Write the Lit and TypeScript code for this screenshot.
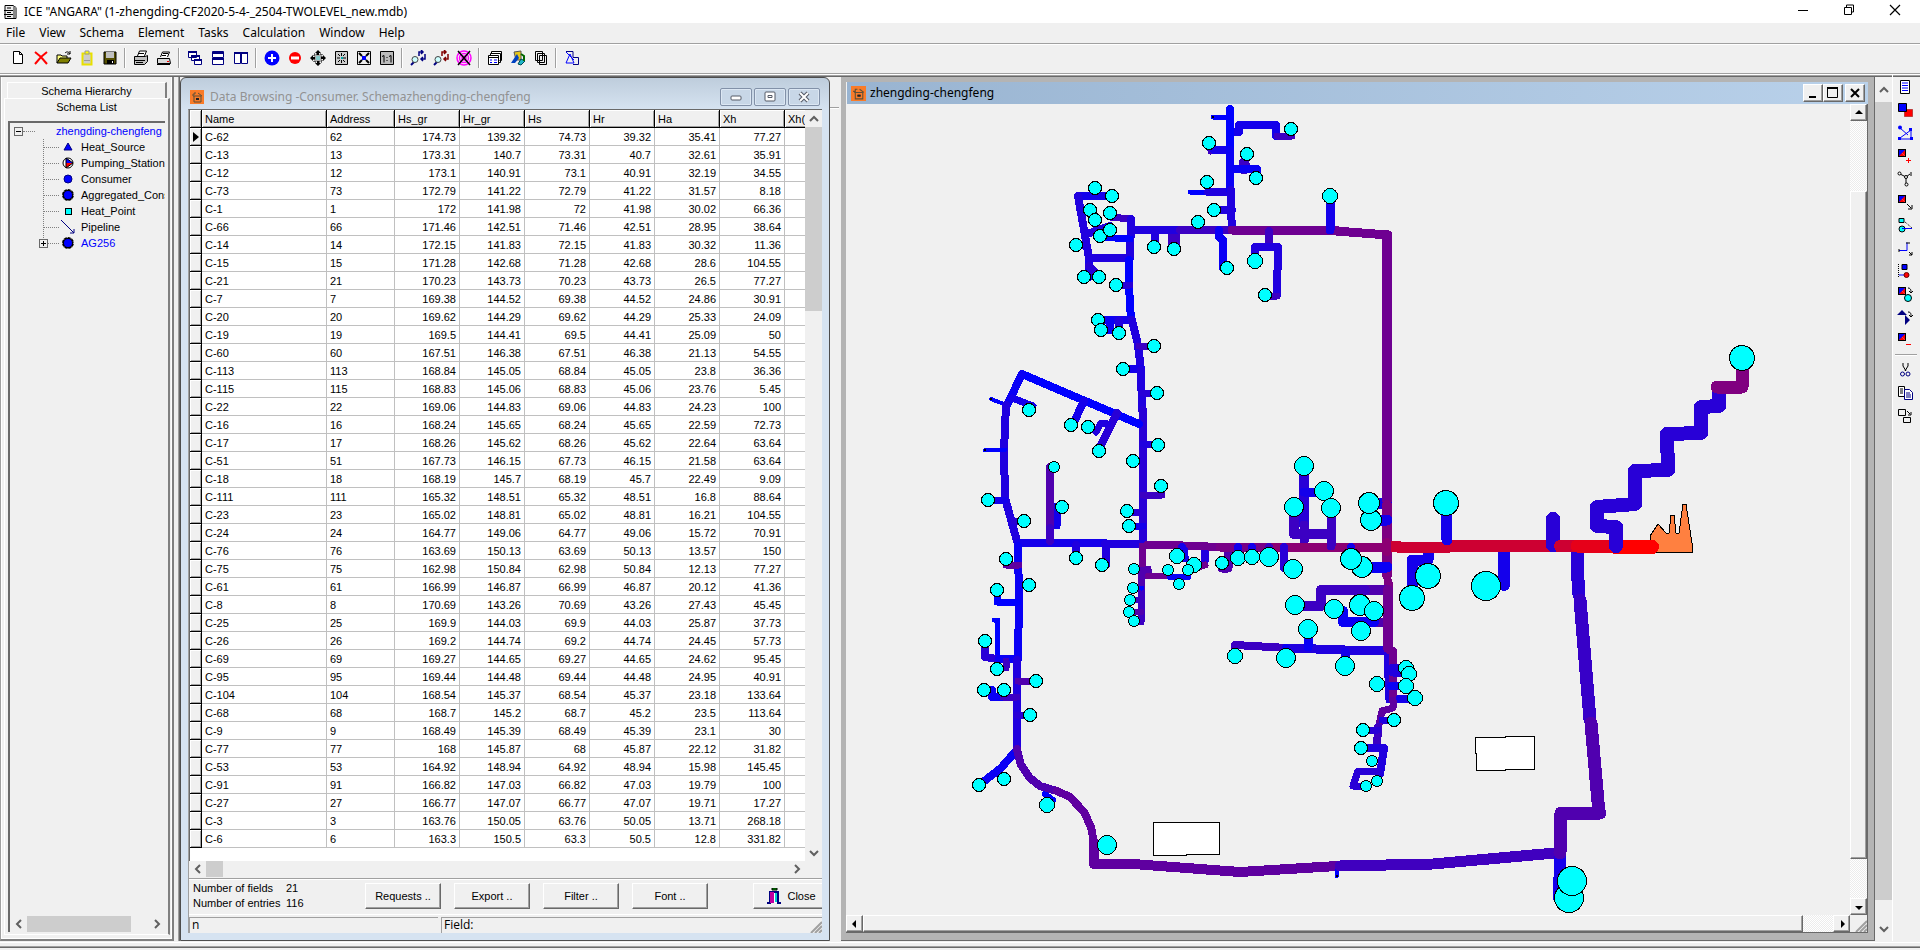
import { LitElement, html, svg, css } from "lit";
import { customElement } from "lit/decorators.js";
import { styleMap } from "lit/directives/style-map.js";

const FIELDS = ["Name", "Address", "Hs_gr", "Hr_gr", "Hs", "Hr", "Ha", "Xh", "Xh(p)"];

const ROWS = `62 174.73 139.32 74.73 39.32 35.41 77.27
13 173.31 140.7 73.31 40.7 32.61 35.91
12 173.1 140.91 73.1 40.91 32.19 34.55
73 172.79 141.22 72.79 41.22 31.57 8.18
1 172 141.98 72 41.98 30.02 66.36
66 171.46 142.51 71.46 42.51 28.95 38.64
14 172.15 141.83 72.15 41.83 30.32 11.36
15 171.28 142.68 71.28 42.68 28.6 104.55
21 170.23 143.73 70.23 43.73 26.5 77.27
7 169.38 144.52 69.38 44.52 24.86 30.91
20 169.62 144.29 69.62 44.29 25.33 24.09
19 169.5 144.41 69.5 44.41 25.09 50
60 167.51 146.38 67.51 46.38 21.13 54.55
113 168.84 145.05 68.84 45.05 23.8 36.36
115 168.83 145.06 68.83 45.06 23.76 5.45
22 169.06 144.83 69.06 44.83 24.23 100
16 168.24 145.65 68.24 45.65 22.59 72.73
17 168.26 145.62 68.26 45.62 22.64 63.64
51 167.73 146.15 67.73 46.15 21.58 63.64
18 168.19 145.7 68.19 45.7 22.49 9.09
111 165.32 148.51 65.32 48.51 16.8 88.64
23 165.02 148.81 65.02 48.81 16.21 104.55
24 164.77 149.06 64.77 49.06 15.72 70.91
76 163.69 150.13 63.69 50.13 13.57 150
75 162.98 150.84 62.98 50.84 12.13 77.27
61 166.99 146.87 66.99 46.87 20.12 41.36
8 170.69 143.26 70.69 43.26 27.43 45.45
25 169.9 144.03 69.9 44.03 25.87 37.73
26 169.2 144.74 69.2 44.74 24.45 57.73
69 169.27 144.65 69.27 44.65 24.62 95.45
95 169.44 144.48 69.44 44.48 24.95 40.91
104 168.54 145.37 68.54 45.37 23.18 133.64
68 168.7 145.2 68.7 45.2 23.5 113.64
9 168.49 145.39 68.49 45.39 23.1 30
77 168 145.87 68 45.87 22.12 31.82
53 164.92 148.94 64.92 48.94 15.98 145.45
91 166.82 147.03 66.82 47.03 19.79 100
27 166.77 147.07 66.77 47.07 19.71 17.27
3 163.76 150.05 63.76 50.05 13.71 268.18
6 163.3 150.5 63.3 50.5 12.8 331.82`.split("\n").map((line) => line.split(" "));

// Pipe segments: colour, stroke width, points in map units.
type Pipe = [string, number, string];
const B = "#0000ff", B1 = "#0a00f5", B2 = "#1400eb", B3 = "#2000df", B4 = "#2800d7", B5 = "#3c00c3", P1 = "#5000af", P2 = "#5f00a0", P3 = "#6e0091", P4 = "#8c0073";
const PIPES: Pipe[] = [
  // north branch
  [B, 5, "1213,117 1230,117"], [B2, 8, "1231,132 1239,132 1239,125 1276,125 1276,136"], [B5, 7, "1277,136 1292,136"],
  [B5, 7, "1211,151 1216,150"], [B2, 8, "1214,150 1230,150"], [B5, 11, "1244,163 1244,169"], [B1, 8, "1231,169 1257,169 1257,172"],
  [B, 5, "1190,192 1206,192"], [B3, 8, "1208,192 1231,192"], [B3, 8, "1214,210 1232,210"],
  [B, 8, "1230,109 1230,150"], [B1, 8, "1230,150 1230,190"], [B3, 8, "1231,190 1231,212 1232,228"],
  [B3, 8, "1155,232 1155,247"], [B5, 12, "1174,234 1174,246"], [B3, 8, "1198,222 1198,230"],
  [B3, 8, "1131,230 1182,230"], [B5, 8, "1180,230 1230,230"],
  [B1, 8, "1219,230 1219,237 1223,240 1223,268"], [P3, 9, "1232,230 1336,230"], [P3, 9, "1336,231 1388,235"],
  [B2, 9, "1330,200 1330,230"], [B5, 8, "1269,231 1269,246"], [B3, 8, "1255,261 1255,247 1278,247 1277,295"], [B5, 7, "1266,296 1277,296"],
  // north-west cluster
  [B2, 8, "1078,196 1110,196"], [B5, 7, "1110,217 1131,219"], [B3, 8, "1131,219 1130,258"], [B3, 8, "1087,234 1110,226"], [B, 7, "1100,237 1130,239"],
  [B1, 8, "1076,245 1086,245"], [B3, 8, "1078,196 1089,258"], [B2, 8, "1089,258 1089,277"], [B4, 8, "1089,266 1099,276"], [B3, 8, "1089,258 1130,258"],
  [B, 8, "1129,260 1129,286 1131,320"], [B4, 7, "1116,285 1130,285"], [B2, 8, "1098,320 1131,320"], [B1, 8, "1110,320 1110,330 1101,330"], [B3, 8, "1119,321 1119,332"],
  [B3, 8, "1132,320 1138,345 1141,370"], [B5, 7, "1139,346 1154,346"], [B2, 8, "1123,369 1141,369"], [B3, 8, "1141,370 1142,410"], [B4, 8, "1143,410 1143,543"],
  [B4, 7, "1143,393 1157,393"], [B3, 7, "1143,444 1158,444"], [B5, 7, "1143,495 1162,495"], [B4, 7, "1127,512 1143,512"], [B2, 7, "1129,526 1143,526"],
  // west loop
  [B, 8, "1022,374 1139,424"], [B1, 8, "1022,374 1008,403"], [B, 4, "991,399 1009,406"], [B2, 7, "1012,398 1033,406"],
  [B3, 8, "1006,405 1004,450 1005,498"], [B, 4, "985,450 1005,450"], [B2, 8, "1084,401 1073,424"], [B4, 8, "1117,413 1101,445"], [B3, 7, "1108,424 1101,423 1096,432"],
  [B3, 8, "1005,498 1017,541"], [B2, 7, "988,500 1005,500"], [B4, 7, "1014,521 1024,521"],
  [B2, 8, "1018,543 1105,543"], [B3, 8, "1105,544 1145,544"], [B2, 7, "1057,506 1057,526"], [P1, 8, "1050,467 1050,526"], [B5, 8, "1050,528 1050,541"],
  [B3, 8, "1076,545 1076,558"], [B3, 8, "1106,545 1106,565"],
  [B1, 8, "1018,546 1019,600 1018,659"], [P2, 7, "1006,565 1019,565"], [B, 7, "997,590 997,602 1018,602"], [B, 5, "994,620 998,620 997,658"],
  [B4, 8, "985,641 985,657 997,659"], [B1, 8, "999,659 1018,659"], [B5, 7, "1006,661 1006,668"], [B3, 8, "1017,660 1017,750"],
  [P1, 7, "1018,681 1036,681"], [B1, 8, "992,690 992,697 1003,697"], [B5, 7, "1003,697 1017,697"], [B4, 7, "1017,715 1030,715"],
  [B1, 8, "1015,752 1001,768 983,782"], [B, 6, "1045,794 1053,800"],
  [P1, 8, "1017,749 1021,765 1030,778 1040,786 1057,791"], [P2, 8, "1057,791 1070,797 1084,812 1091,827 1094,843"], [P2, 10, "1094,843 1094,864 1133,864 1240,872 1337,866"],
  [B, 4, "1337,870 1337,876"], ["#4000bf", 11, "1340,866 1433,864 1555,853"],
  // central stubs
  [B2, 8, "1182,547 1185,558"], [B3, 8, "1205,548 1205,560"], [P3, 7, "1198,567 1205,565"], [P1, 9, "1228,549 1228,568 1222,568"],
  [P3, 7, "1142,546 1142,570"], [P1, 7, "1142,570 1141,590"], [B5, 7, "1141,590 1141,622"], [P1, 7, "1148,569 1148,576"], [P3, 6, "1148,576 1170,576"], [B1, 6, "1170,577 1188,577"],
  [B, 5, "1141,588 1142,588"], [B5, 6, "1130,600 1141,600"], [P1, 6, "1130,612 1141,612"],
  [P3, 8, "1147,545 1170,545 1220,547"], ["#780087", 9, "1220,547 1270,547"],
  [B5, 10, "1294,507 1294,534 1331,534"], [B4, 10, "1304,466 1304,525"], [B5, 9, "1304,525 1304,542"], [B2, 9, "1304,492 1324,492"],
  [P4, 9, "1270,547 1387,547"], [B5, 9, "1331,512 1331,546"], [B2, 8, "1182,547 1184,550"], [B2, 8, "1238,547 1238,558"], [B2, 8, "1252,547 1252,557"], [B5, 8, "1269,547 1269,557"], [B4, 8, "1284,547 1284,568"], [B2, 8, "1351,547 1351,559"],
  [B2, 11, "1371,503 1387,503"], [B2, 11, "1371,520 1387,520"],
  [P3, 10, "1387,235 1387,500"], ["#7d0082", 10, "1387,505 1387,575"], [B2, 11, "1371,520 1387,520"], [B1, 11, "1362,567 1387,567"], ["#7d0082", 9, "1388,582 1388,588"],
  [P1, 10, "1360,590 1388,590"], [B5, 10, "1365,590 1321,590 1321,606 1295,606"], [P1, 9, "1374,622 1388,622"], [B1, 10, "1343,611 1343,622 1374,622"],
  [B5, 8, "1235,654 1235,645 1288,648"], [B3, 9, "1286,648 1345,650 1388,650"], [B1, 9, "1308,629 1308,647"], [B2, 9, "1345,652 1345,660"], [B1, 8, "1286,648 1286,652"],
  [B3, 7, "1387,655 1389,700"], [P3, 10, "1388,590 1388,648"], [P3, 8, "1389,650 1393,651 1393,700"],
  [B3, 13, "1393,670 1404,670"], [B1, 8, "1391,686 1406,686"], [B2, 8, "1399,699 1415,699"], [P2, 7, "1393,700 1393,708 1382,711 1379,725"], [B3, 7, "1382,720 1394,720"],
  [B5, 8, "1378,727 1377,748"], [B4, 7, "1363,730 1378,730"], [B3, 8, "1361,748 1384,748 1380,774"], [B4, 7, "1378,771 1358,771 1353,786 1364,786"],
  // trunk from the plant
  [B2, 11, "1428,553 1428,560 1412,560 1412,590"], [B2, 12, "1504,550 1504,585"], ["#cd0032", 11, "1397,547 1450,547"], ["#cd0032", 12, "1446,546 1572,546"],
  [P4, 10, "1387,543 1387,551"],
  [B2, 11, "1446,505 1447,540"], [B4, 13, "1577,550 1577,565 1579,595"], ["#3700c8", 13, "1580,600 1590,720"], [P1, 13, "1591,723 1599,813"],
  [B2, 12, "1560,858 1559,898"], [P1, 13, "1600,813 1561,813 1560,853"], [B4, 14, "1553,519 1553,545"],
  ["#cd0032", 12, "1560,546 1575,546"], ["#e60019", 13, "1577,546 1620,546"]
];
const SUPPLY: Pipe[] = [
  ["#ff0000", 14, "1616,547 1652,547"],
  [B4, 14, "1719,388 1719,406 1701,407 1701,433 1667,434 1668,470 1635,471 1635,504 1597,507 1597,526 1616,527 1616,546"],
  ["#800080", 13, "1742,360 1742,387 1717,387"]
];
const TRUNK_JOIN = "M1391 541h10v11h-10z";

// Consumers: centre x, centre y, radius.
const NODES: number[][] = [
  ...[[1291, 129], [1209, 143], [1247, 154], [1256, 178], [1207, 182], [1214, 210], [1198, 222], [1154, 247], [1174, 249], [1227, 268], [1265, 295],
    [1095, 188], [1112, 196], [1090, 210], [1095, 220], [1110, 213], [1100, 236], [1110, 230], [1076, 245], [1084, 277], [1099, 277], [1116, 285], [1098, 320], [1101, 330], [1119, 333],
    [1154, 346], [1123, 369], [1157, 393], [1158, 445], [1133, 461], [1161, 486], [1127, 511], [1129, 526], [1029, 410], [1071, 425], [1088, 427], [1099, 451],
    [988, 500], [1024, 521], [1062, 507], [1076, 558], [1102, 565], [1006, 559], [1029, 585], [997, 590], [985, 641], [997, 669], [1036, 681], [984, 690], [1004, 690],
    [1030, 715], [979, 785], [1004, 779], [1222, 563], [1394, 720], [1363, 730], [1361, 748]].map(([x, y]) => [x, y, 6.5]),
  ...[[1330, 196], [1255, 261], [1047, 805], [1177, 556], [1194, 565], [1238, 558], [1252, 557], [1235, 656], [1406, 668], [1409, 674], [1377, 684], [1406, 686], [1415, 698]].map(([x, y]) => [x, y, 7.5]),
  ...[[1054, 467], [1134, 569], [1188, 570], [1168, 570], [1179, 584], [1133, 588], [1130, 600], [1129, 612], [1134, 621], [1372, 761], [1377, 781], [1366, 786]].map(([x, y]) => [x, y, 5.5]),
  ...[[1107, 845], [1269, 557], [1293, 569], [1304, 466], [1324, 491], [1294, 507], [1331, 508], [1295, 605], [1334, 609], [1308, 629], [1361, 631], [1286, 658], [1345, 666]].map(([x, y]) => [x, y, 9.5]),
  [1371, 520, 10.5], [1369, 503, 10.5], [1362, 567, 10.5], [1351, 559, 10.5], [1360, 605, 10.5], [1374, 611, 9.5],
  [1446, 503, 12.5], [1428, 576, 12.5], [1412, 598, 12.5], [1742, 358, 12.5], [1486, 586, 14.5], [1569, 898, 14.5], [1572, 881, 14.5]
];
const STUB_ENDS = [[1213, 117], [991, 399], [985, 450], [1337, 876]];

const n = "#000080";
const house = svg`<rect width="14" height="14" fill="#f97b28"/><path d="M2 5h2V3h2M8 3l4 3M3 6h8M4 6v6h7V6M6 9h3" fill="none" stroke="#5d5038"/><path d="M6 8h3v2H6z" fill="#222"/>`;
const splitSquare = svg`<path d="M1 1h8v8z" fill="#f00"/><path d="M1 1v8h8z" fill="#f00"/><path d="M1 1h8l-8 8z" fill="#00f"/><rect x="1.5" y="1.5" width="7" height="7" fill="none" stroke="#000"/>`;
const magnifier = svg`<path d="M1 15l4-4" stroke="${n}" stroke-width="2"/><circle cx="5" cy="9.5" r="3" fill="#cff" stroke="#444"/>`;

const ICONS: Record<string, unknown> = {
  app: svg`<path d="M3 1.500h8l3 2v11H3z" fill="#eee" stroke="#000"/><path d="M11 2v12h3V3z" fill="#888"/><path d="M2 6.500h9M2 10.500h9M5 4h4M5 8.500h4M5 12.500h4" stroke="#000"/>`,
  house,
  new: svg`<path d="M3.500 1.500h6l3 3v9h-9zM9.500 1.500v3h3" fill="#fff" stroke="#000"/>`,
  del: svg`<path d="M2 2l6 5 6-5M2 14l6-7 6 7" fill="none" stroke="#f00" stroke-width="2"/>`,
  open: svg`<path d="M1 13V5h4l1 1h5v2" fill="#ffff80" stroke="#000"/><path d="M1 13l3-5h11l-3 5z" fill="#808000" stroke="#000"/><path d="M9 3c2-2 4-1 5 1M14 1v3h-3" fill="none" stroke="#000"/>`,
  paste: svg`<path d="M3.500 3.500h9v11h-9z" fill="#ccc" stroke="#e8e000" stroke-width="2"/><path d="M6 1h4v3H6z" fill="#ff0" stroke="#999"/><path d="M5 10.500h6" stroke="#999"/>`,
  save: svg`<path d="M2 2h12v12H2z" fill="#554f00" stroke="#000"/><path d="M4 2h8v6H4z" fill="#c0c0c0"/><path d="M5 10h7v4H5z" fill="#000"/><path d="M10 11h1v2h-1z" fill="#fff"/>`,
  print: svg`<path d="M4.500 6l2-5h7l-2 5" fill="#fff" stroke="#000"/><path d="M1.500 6.500h11l2-1v6l-3 3h-10z" fill="#c0c0c0" stroke="#000"/><path d="M1 10.500h11M6 3.500h5M3 12.500h7" stroke="#000"/>`,
  print2: svg`<path d="M4.500 7l2-5h7l-2 5" fill="#fff" stroke="#000"/><path d="M1.500 8.500h12l1 5h-13z" fill="#d8d8d8" stroke="#000"/><path d="M7 3.500h5M6 5.500h4M1 14.500h13" stroke="#000"/><path d="M11 11h2v1h-2z" fill="red"/>`,
  cascade: svg`<g fill="#fff" stroke="${n}"><path d="M1.500 1.500h8v6h-8zM4.500 5.500h8v5h-8zM7.500 9.500h7v5h-7z"/><path stroke-width="2" d="M1 2h9M4 6h9M7 10h8"/></g>`,
  tileh: svg`<g fill="#fff" stroke="${n}"><path d="M2.500 1.500h11v6h-11zM2.500 8.500h11v6h-11z"/><path stroke-width="2" d="M2 3h12M2 9h12"/></g>`,
  tilev: svg`<g fill="#fff" stroke="${n}"><path d="M1.500 2.500h6v11h-6zM8.500 2.500h6v11h-6z"/><path stroke-width="2" d="M1 3h14"/></g>`,
  plus: svg`<circle cx="8" cy="8" r="7.500" fill="#00f"/><path d="M8 4v8M4 8h8" stroke="#fff" stroke-width="2"/>`,
  minus: svg`<circle cx="8" cy="8" r="6" fill="#f00"/><path d="M4 8h8" stroke="#fff" stroke-width="3"/>`,
  expand: svg`<path d="M4 4h8v8H4z" fill="#aaa" stroke="#000" stroke-dasharray="1 1"/><path d="M8 0l3 3H5zM8 16l3-3H5zM0 8l3-3v6zM16 8l-3-3v6z" fill="#000"/><path d="M8 2v3M8 11v3M2 8h3M11 8h3" stroke="#000" stroke-width="2"/><path d="M6 6h4v4H6z" fill="#8cc"/>`,
  center: svg`<path d="M2.500 1.500h12v13h-12z" fill="#ccc" stroke="#000"/><path d="M8.500 3v3M8.500 10v3M4 8h3M10 8h3M5 4l2 2M12 4l-2 2M5 12l2-2M12 12l-2-2" stroke="#000"/><path d="M8 7h2v2H8z" fill="#0aa"/>`,
  fit: svg`<path d="M1.500 1.500h13v13h-13z" fill="#eee" stroke="#000"/><path d="M3 3l3 3M13 3l-3 3M3 13l3-3M13 13l-3-3" stroke="#000" stroke-width="2"/><path d="M6 6h4v4H6z" fill="#00f"/>`,
  oneone: svg`<path d="M1.500 1.500h13v13h-13z" fill="#bbb" stroke="#000"/><path d="M3 6.500l2-1v7M10 6.500l2-1v7M8 7v1M8 10v1" fill="none" stroke="#000"/>`,
  find: svg`${magnifier}<path d="M9 6V2h3M15 4v5h-3M11 0l2 2-2 2M13 7l-2 2 2 2" fill="none" stroke="${n}" stroke-width="1.500"/>`,
  find2: svg`${magnifier}<path d="M9 6V2h3M15 4v5h-3M11 0l2 2-2 2M13 7l-2 2 2 2" fill="none" stroke="#800000" stroke-width="1.500"/>`,
  target: svg`<g fill="none" stroke="#f0f" stroke-width="1.500"><circle cx="8" cy="8" r="2"/><circle cx="8" cy="8" r="4.500"/><circle cx="8" cy="8" r="7"/></g><path d="M2 1l12 14M14 1L2 15" stroke="#000" stroke-width="1.500"/>`,
  report: svg`<path d="M4.500 3.500v-2h10v9h-2M3.500 5.500v-2h10v9h-2" fill="#fff" stroke="#000"/><path d="M1.500 5.500h10v9h-10z" fill="#fff" stroke="#000"/><path d="M2 7.500h9" stroke="#000"/><path d="M3 10h2M7 10h3M3 12.500h2M7 12.500h3" stroke="#00f"/>`,
  palette: svg`<path d="M4 2l7-1v9H6z" fill="#e6c619" stroke="#555"/><path d="M1 13L7 4l2 4-4 5z" fill="#0040c0"/><path d="M8 14l3-5 4 2-4 4z" fill="#20b8c8" stroke="#045"/><path d="M11 4l3 2v5" fill="none" stroke="#060" stroke-width="2"/>`,
  copies: svg`<g fill="#f0f0f0" stroke="#000"><path d="M2.500 1.500h7v9h-7zM4.500 3.500h7v9h-7zM6.500 5.500h7v9h-7z"/></g>`,
  calc: svg`<path d="M2 1.500h7v6h5.500v7H9" fill="none" stroke="${n}"/><path d="M2 13l4-9 4 9zM2 2l8 8" fill="none" stroke="#00f"/>`,
  list: svg`<path d="M3.500 1.500h9v13h-9z" fill="#fff" stroke="#000"/><path d="M5 4h6M5 6.500h6M5 9h6M5 11.500h6" stroke="#00f"/>`,
  group: svg`<path d="M7.500 7.500h8v7h-8z" fill="#f00" stroke="#800" stroke-dasharray="1 1"/><path d="M1.500 1.500h8v8h-8z" fill="#00f" stroke="#000"/>`,
  netsel: svg`<path d="M3 13l11-8v9H3zM3 3l8 7" fill="none" stroke="#00f"/><g fill="#00f"><circle cx="3" cy="2.500" r="2"/><path d="M12 3h3v3h-3zM1 12h3v3H1zM13 12h3v3h-3z"/></g>`,
  addsq: svg`${splitSquare}<path d="M11.500 10v5M9 12.500h5" stroke="#f00"/>`,
  branch: svg`<path d="M3 3l6 3 4-3M9 6v7" fill="none" stroke="#000"/><g fill="#fff" stroke="#000"><circle cx="2.500" cy="2.500" r="1.500"/><circle cx="9" cy="6" r="1.500"/><circle cx="9.500" cy="13.500" r="1.500"/></g><path d="M14 1v4" stroke="#000"/>`,
  movesq: svg`${splitSquare}<path d="M10 10l4 4M15 11v4h-4" fill="none" stroke="#000"/>`,
  shape: svg`<path d="M2 1.500h5v4H2z" fill="#0ff" stroke="#000"/><circle cx="5" cy="12" r="3" fill="#0ff" stroke="#000"/><path d="M5 11.500h10" stroke="#00f"/><path d="M8 5l7 6" stroke="#000" stroke-dasharray="1 1"/>`,
  corner: svg`<path d="M2 10.500h8v-8" fill="none" stroke="#00f"/><path d="M9 3h4M2 9v3M12 12l3 3M15 12v3h-3" fill="none" stroke="#000"/>`,
  pump: svg`<path d="M5 1.500h5v5H5z" fill="#00f" stroke="#000"/><path d="M1.500 1v13" stroke="#000" stroke-dasharray="1 1"/><path d="M2 12h6" stroke="#00f"/><circle cx="9.500" cy="12" r="2.500" fill="#f00" stroke="#600"/>`,
  swap: svg`${splitSquare}<circle cx="11" cy="12" r="3.500" fill="#0ff" stroke="#000"/><path d="M11 2c3 0 3 3 3 4M12 5l2 2 2-2" fill="none" stroke="#000"/>`,
  flip: svg`<path d="M0 6l5-5 5 5zM8 6v10l5-5z" fill="${n}"/><path d="M11 3c3 0 3 2 3 4M12 6l2 2 2-2" fill="none" stroke="#000"/>`,
  remsq: svg`${splitSquare}<path d="M9 12.500h5" stroke="#f00"/>`,
  cut: svg`<path d="M6 1v3l3 5M11 1v3L8 9" fill="none" stroke="#000"/><circle cx="5.500" cy="12" r="2" fill="none" stroke="${n}"/><circle cx="11" cy="12" r="2" fill="none" stroke="${n}"/>`,
  copy: svg`<path d="M1.500 1.500h6v10h-6z" fill="#fff" stroke="#000"/><path d="M3 4h3M3 6h3M3 8h3" stroke="#000"/><path d="M7.500 4.500h5l3 3v7h-8z" fill="#fff" stroke="${n}"/><path d="M9 8h4M9 10h5M9 12h5" stroke="${n}"/>`,
  dup: svg`<g fill="none" stroke="#000"><path d="M1.500 1.500h7v6h-7zM6.500 9.500h7v5h-7zM10 3l3 3M14 4v3h-3"/></g>`,
  min: svg`<path d="M3 8.500h10" stroke="#000"/>`,
  restore: svg`<path d="M3.500 5.500h7v7h-7zM5.500 5v-2h7v7h-2" fill="none" stroke="#000"/>`,
  close: svg`<path d="M3 3l10 10M13 3L3 13" stroke="#000" stroke-width="1.200"/>`,
  softmin: svg`<rect x="3" y="7" width="10" height="4" rx="1" fill="#fff" stroke="#555a66"/>`,
  softmax: svg`<rect x="3" y="3" width="10" height="9" rx="1" fill="#fff" stroke="#555a66"/><path d="M6 6.500h4v2H6z" fill="none" stroke="#555a66"/>`,
  softclose: svg`<path d="M4 4l8 8M12 4l-8 8" stroke="#555a66" stroke-width="4"/><path d="M4 4l8 8M12 4l-8 8" stroke="#fff" stroke-width="2"/>`,
  hardmin: svg`<path d="M4 12h7" stroke="#000" stroke-width="2"/>`,
  hardmax: svg`<path d="M2.500 2.500h10v10h-10z" fill="none" stroke="#000"/><path d="M2 3h11" stroke="#000" stroke-width="2"/>`,
  hardclose: svg`<path d="M4 4l8 8M12 4l-8 8" stroke="#000" stroke-width="2"/>`,
  source: svg`<path d="M4 11l4-7 4 7z" fill="#00f" stroke="${n}"/>`,
  station: svg`<circle cx="8" cy="8" r="5" fill="#fff" stroke="#000"/><path d="M6 3l7 5H6z" fill="#00f"/><path d="M6 8h7l-7 5z" fill="#f00"/><path d="M6 3v10l7-5z" fill="none" stroke="#000"/>`,
  consumer: svg`<circle cx="8" cy="8" r="4" fill="#00f" stroke="${n}"/>`,
  aggregated: svg`<circle cx="8" cy="8" r="5" fill="#00f" stroke="#000" stroke-width="2"/><circle cx="8" cy="8" r="5.500" fill="none" stroke="#fff" stroke-dasharray="1 3"/>`,
  point: svg`<rect x="5.500" y="5.500" width="6" height="6" fill="#0ff" stroke="#000"/>`,
  pipeline: svg`<path d="M1 1l13 13M14 10v4h-4" fill="none" stroke="${n}"/>`,
  door: svg`<path d="M1 15h3V4h8v11h3" fill="#fff" stroke="${n}" stroke-width="2"/><path d="M4 4h4v11H4z" fill="#c000a0"/><path d="M9 5h2v9H9z" fill="#0cc"/><path d="M6 0h5v2H6z" fill="#0a0" stroke="#000"/>`
};
const icon = (name: string, size = 16) =>
  html`<svg class="icon" width=${size} height=${size} viewBox=${name === "house" ? "0 0 14 14" : "0 0 16 16"} aria-hidden="true">${ICONS[name]}</svg>`;

const chevron = (turn: string) => {
  const d: Record<string, string> = { up: "M4 10l4-4 4 4", down: "M4 6l4 4 4-4", left: "M10 4L6 8l4 4", right: "M6 4l4 4-4 4" };
  return html`<svg class="icon" width="16" height="16" viewBox="0 0 16 16" aria-hidden="true"><path d=${d[turn]} fill="none" stroke="#606060" stroke-width="2" /></svg>`;
};
const arrow = (turn: string) => {
  const d: Record<string, string> = { up: "M1 6l4-4 4 4z", down: "M1 4l4 4 4-4z", left: "M6 1L2 5l4 4z", right: "M4 1l4 4-4 4z" };
  return html`<svg class="icon" width="10" height="10" viewBox="0 0 10 10" aria-hidden="true"><path d=${d[turn]} /></svg>`;
};

@customElement("app-root")
export class AppRoot extends LitElement {
  static styles = css`
    :host { display: flex; flex-direction: column; height: 100vh; background: #f0f0f0; color: #000; font: 11px/16px "Liberation Sans", Arial, sans-serif; overflow: hidden; }
    * { box-sizing: border-box; }
    button { font: inherit; color: inherit; margin: 0; padding: 0; border: 0; background: none; display: flex; align-items: center; justify-content: center; }
    .icon { display: block; flex: none; }
    .ui { font: 12px/16px "Open Sans", "Noto Sans", sans-serif; }
    .wide { font: 12px/16px "Noto Sans", "Open Sans", sans-serif; }
    .grow { flex: 1; min-width: 0; }

    .caption { display: flex; align-items: center; height: 23px; padding: 0 2px; background: #fff; }
    .caption h1 { margin: 0 0 0 6px; font-weight: 400; font-size: 12px; flex: 1; }
    .caption button { width: 46px; height: 23px; padding-bottom: 4px; }
    .menu { display: flex; gap: 14px; height: 22px; padding: 0 6px 1px; border-bottom: 1px solid #fff; box-shadow: inset 0 -1px #a0a0a0; }
    .tools { display: flex; align-items: center; height: 30px; padding: 0 6px 4px; border-bottom: 1px solid #fff; box-shadow: inset 0 -1px #a0a0a0; }
    .tools button { width: 23px; height: 22px; }
    .sep { width: 2px; height: 20px; margin: 0 3px; background: #a0a0a0; border-right: 1px solid #fff; }

    .main { flex: 1; min-height: 0; display: flex; border-top: 1px solid #a0a0a0; border-bottom: 1px solid #fff; box-shadow: inset 0 1px #696969; padding: 1px 0; }
    .foot { height: 7px; padding-top: 3px; }
    .foot i { display: block; height: 2px; background: #696969; border-top: 1px solid #a0a0a0; }

    .side { width: 174px; flex: none; display: flex; flex-direction: column; padding: 5px 2px 4px 3px; border-left: 1px solid #a0a0a0; border-right: 2px solid #808080; border-bottom: 2px solid #808080; box-shadow: inset 1px 0 #fff, inset -1px -1px #fff; }
    .tab { height: 16px; margin: 0 3px; border: 1px solid #fff; border-right: 2px solid #808080; border-bottom: 0; flex: none; }
    .page { flex: 1; min-height: 0; display: flex; flex-direction: column; border: 1px solid #fff; border-right: 2px solid #808080; padding: 0 3px 2px; }
    .page > button { height: 18px; margin-bottom: 4px; padding-bottom: 2px; }
    .tree { flex: 1; min-height: 0; overflow: hidden; border: 1px solid #a0a0a0; border-width: 2px 0 0 2px; border-color: #696969; display: flex; flex-direction: column; }
    .tree ul { list-style: none; margin: 0; padding: 0; }
    .tree > ul { flex: 1; padding: 0 0 0 4px; }
    .tree li > span { display: flex; align-items: center; height: 16px; white-space: nowrap; }
    .box { width: 9px; height: 9px; border: 1px solid #696969; flex: none; background: linear-gradient(#000, #000) center / 5px 1px no-repeat; }
    .box.more { background: linear-gradient(#000, #000) center / 5px 1px no-repeat, linear-gradient(#000, #000) center / 1px 5px no-repeat; }
    .dots { width: 12px; height: 0; border-top: 1px dotted #808080; flex: none; }
    .root .name { margin-left: 21px; }
    .tree .kids { margin-left: 29px; background: repeating-linear-gradient(#808080 0 1px, transparent 1px 2px) left top / 1px 104px no-repeat; }
    .kids .dots { width: 16px; }
    .kids .icon { margin: 0 5px 0 1px; }
    .kids .open .box { margin-left: -4px; }
    .kids .open .dots { width: 11px; }
    .blue { color: #00f; }
    .splitter { width: 6px; flex: none; border-right: 1px solid #696969; box-shadow: inset -1px 0 #a0a0a0; }

    .hbar { display: flex; height: 16px; flex: none; background: #f0f0f0; align-items: stretch; }
    .hbar button { width: 17px; flex: none; }
    .vbar { display: flex; flex-direction: column; width: 17px; flex: none; background: #f0f0f0; }
    .vbar button { height: 17px; flex: none; }
    .thumb { background: #cdcdcd; flex: none; }

    .data { width: 650px; flex: none; display: flex; flex-direction: column; padding: 0 7px 7px; border: 1px solid #4d4d4d; border-radius: 6px 6px 0 0; background: linear-gradient(#becddc, #d6e3f1 32px); }
    .data header { display: flex; align-items: center; height: 31px; padding: 6px 2px 0 2px; gap: 2px; color: #929292; flex: none; }
    .data h2, .map h2 { margin: 0 0 0 4px; font-weight: 400; font-size: 12px; flex: 1; white-space: nowrap; }
    .data header button { width: 32px; height: 18px; border: 1px solid #8291a8; border-radius: 2px; background: #c8d7e7; box-shadow: inset 0 0 0 1px #dce7f3; }
    .client { flex: 1; min-height: 0; display: flex; flex-direction: column; background: #f0f0f0; border-top: 1px solid #696969; border-left: 1px solid #a0a0a0; overflow: hidden; }
    .sheet { flex: 1; min-height: 0; display: flex; border-left: 1px solid #696969; }
    .view { flex: 1; min-width: 0; overflow: hidden; background: #fff; }
    table { table-layout: fixed; width: 660px; border-collapse: separate; border-spacing: 0; }
    td, th { height: 18px; padding: 0 3px; line-height: 16px; font-weight: 400; text-align: right; white-space: nowrap; overflow: hidden; border-right: 1px solid #c0c0c0; border-bottom: 1px solid #c0c0c0; }
    th { text-align: left; background: #f0f0f0; border-color: #000; box-shadow: inset 1px 1px #fff, inset -1px -1px #a0a0a0; }
    td.mark { background: #f0f0f0; border-color: #000; padding: 0 3px; box-shadow: inset 1px 1px #fff, inset -1px -1px #a0a0a0; }
    td.left { text-align: left; }
    .c0 { width: 12px; } .c1 { width: 125px; } .c2 { width: 68px; } .cn { width: 65px; }
    .actions { display: flex; align-items: flex-start; height: 36px; margin-top: 1px; padding: 4px 0 0 4px; border-top: 1px solid #a0a0a0; box-shadow: inset 0 1px #fff; flex: none; }
    dl { display: grid; grid-template-columns: 93px 79px; line-height: 15px; margin: -2px 0 0; }
    dd { margin: 0; }
    .push { width: 76px; height: 26px; flex: none; margin-right: 13px; background: #f0f0f0; border: 1px solid #fff; border-right-color: #696969; border-bottom-color: #696969; box-shadow: inset -1px -1px #a0a0a0; gap: 5px; }
    .push.last { margin: 0 0 0 32px; }
    .status { display: flex; gap: 3px; height: 19px; padding-top: 2px; border-top: 1px solid #fff; flex: none; }
    .status span { height: 16px; padding-left: 2px; border-top: 1px solid #a0a0a0; border-left: 1px solid #a0a0a0; width: 249px; line-height: 14px; }
    .status .wider { flex: 1; display: flex; justify-content: space-between; }

    .gap { width: 11px; flex: none; padding-top: 30px; }
    .gap i { display: block; height: 2px; margin-right: 2px; background: #a0a0a0; border-bottom: 1px solid #fff; }

    .map { flex: 1; min-width: 0; display: flex; flex-direction: column; padding: 5px 6px 7px 5px; background: #b4b4b4; border-right: 1px solid #696969; border-bottom: 1px solid #696969; }
    .map header { display: flex; align-items: center; height: 22px; padding: 0 3px 0 4px; background: linear-gradient(90deg, #99b4d1, #b9d1ea); border-left: 1px solid #f0f0f0; flex: none; }
    .bevel { background: #f0f0f0; border: 1px solid #fff; border-right-color: #696969; border-bottom-color: #696969; box-shadow: inset -1px -1px #a0a0a0; flex: none; }
    .map header .bevel { width: 20px; height: 18px; }
    .map header .bevel:last-child { margin-left: 2px; }
    .field { flex: 1; min-height: 0; display: grid; grid-template-columns: minmax(0, 1fr) 17px; grid-template-rows: minmax(0, 1fr) 17px; background: #f0f0f0; border-right: 1px solid #696969; border-bottom: 1px solid #696969; }
    .canvas { overflow: hidden; }
    .canvas svg { display: block; }
    .old { display: flex; background: repeating-conic-gradient(#fff 0 25%, #ececec 0 50%) 0 0 / 2px 2px; }
    .old.v { flex-direction: column; }
    .old button { width: 17px; height: 17px; }
    .grip { align-self: end; justify-self: end; display: block; }

    .outer button { height: 25px; }
    .rail { width: 28px; flex: none; display: flex; flex-direction: column; align-items: center; border-left: 1px solid #fff; padding: 0 3px 0 0; margin-top: -2px; }
    .rail button { height: 23px; width: 23px; flex: none; }
    .rail i { width: 22px; height: 2px; margin: 3px 0 2px 2px; background: #a0a0a0; border-bottom: 1px solid #fff; }
  `;

  private tool(name: string) {
    return name === "|" ? html`<i class="sep"></i>` : html`<button title=${name} aria-label=${name}>${icon(name)}</button>`;
  }

  private pipe([colour, width, points]: Pipe) {
    return svg`<polyline points=${points} fill="none" stroke=${colour} stroke-width=${width} stroke-linecap="round" stroke-linejoin="round" />`;
  }

  private grip() {
    return html`<svg class="grip" width="14" height="14" viewBox="0 0 14 14" aria-hidden="true"><path d="M3 14L14 3M7 14l7-7M11 14l3-3" stroke="#a0a0a0" stroke-width="2" /></svg>`;
  }

  private renderSide() {
    const items = [["source", "Heat_Source"], ["station", "Pumping_Station"], ["consumer", "Consumer"], ["aggregated", "Aggregated_Consumer"], ["point", "Heat_Point"], ["pipeline", "Pipeline"]];
    return html`<aside class="side">
      <button class="tab">Schema Hierarchy</button>
      <div class="page">
        <button>Schema List</button>
        <div class="tree">
          <ul>
            <li class="root">
              <span><i class="box"></i><i class="dots"></i><span class="name blue">zhengding-chengfeng</span></span>
              <ul class="kids">
                ${items.map(([i, label]) => html`<li><span><i class="dots"></i>${icon(i)}${label}</span></li>`)}
                <li class="open"><span><i class="box more"></i><i class="dots"></i>${icon("aggregated")}<span class="blue">AG256</span></span></li>
              </ul>
            </li>
          </ul>
          <div class="hbar">
            <button aria-label="Scroll left">${chevron("left")}</button>
            <div class="thumb" style=${styleMap({ width: "104px" })}></div><div class="grow"></div>
            <button aria-label="Scroll right">${chevron("right")}</button>
          </div>
        </div>
      </div>
    </aside>`;
  }

  private renderData() {
    return html`<section class="data">
      <header>${icon("house", 14)}<h2 class="wide">Data Browsing -Consumer. Schemazhengding-chengfeng</h2>
        ${["softmin", "softmax", "softclose"].map((i) => html`<button aria-label=${i}>${icon(i)}</button>`)}
      </header>
      <div class="client">
        <div class="sheet">
          <div class="view">
            <table>
              <colgroup><col class="c0" /><col class="c1" /><col class="c2" />${FIELDS.slice(2).map(() => html`<col class="cn" />`)}</colgroup>
              <thead><tr><th></th>${FIELDS.map((f) => html`<th scope="col">${f}</th>`)}</tr></thead>
              <tbody>
                ${ROWS.map(([id, ...values], i) => html`<tr>
                  <td class="mark">${i === 0 ? html`<svg class="icon" width="6" height="10" viewBox="0 0 6 10" aria-hidden="true"><path d="M0 0l6 5-6 5z" /></svg>` : ""}</td>
                  <td class="left">C-${id}</td><td class="left">${id}</td>
                  ${values.map((v) => html`<td>${v}</td>`)}<td></td>
                </tr>`)}
              </tbody>
            </table>
          </div>
          <div class="vbar">
            <button aria-label="Scroll up">${chevron("up")}</button>
            <div class="thumb" style=${styleMap({ height: "184px" })}></div><div class="grow"></div>
            <button aria-label="Scroll down">${chevron("down")}</button>
          </div>
        </div>
        <div class="hbar">
          <button aria-label="Scroll left">${chevron("left")}</button>
          <div class="thumb" style=${styleMap({ width: "17px" })}></div><div class="grow"></div>
          <button aria-label="Scroll right">${chevron("right")}</button><div class="vbar"></div>
        </div>
        <div class="actions">
          <dl><dt>Number of fields</dt><dd>21</dd><dt>Number of entries</dt><dd>116</dd></dl>
          ${["Requests ..", "Export ..", "Filter ..", "Font .."].map((b) => html`<button class="push">${b}</button>`)}
          <button class="push last">${icon("door")}Close</button>
        </div>
        <div class="status ui"><span>n</span><span class="wider">Field:${this.grip()}</span></div>
      </div>
    </section>`;
  }

  private renderMap() {
    return html`<section class="map">
      <header>${icon("house", 15)}<h2 class="wide">zhengding-chengfeng</h2>
        ${["hardmin", "hardmax", "hardclose"].map((i) => html`<button class="bevel" aria-label=${i}>${icon(i)}</button>`)}
      </header>
      <div class="field">
        <div class="canvas">
          <svg width="1004" height="812" viewBox="846 104 1004 812" shape-rendering="crispEdges" role="img" aria-label="Heat network schema">
            ${PIPES.map((p) => this.pipe(p))}
            <path d=${TRUNK_JOIN} fill="#cd0032" />
            <path d="M1650 552v-16l8-12 8 9h3l2-18h3l2 18h3l4-29h3l6 39v9z" fill="#ff8040" stroke="#000" />
            ${SUPPLY.map((p) => this.pipe(p))}
            <path d="M1153.500 822.500h66v32h-33v1h-33z" fill="#fff" stroke="#000" />
            <path d="M1475.500 737.500h30v-1h29v33h-29v1h-29v-17h-1z" fill="#fff" stroke="#000" />
            ${STUB_ENDS.map(([x, y]) => svg`<circle cx=${x} cy=${y} r="1" />`)}
            ${NODES.map(([x, y, r]) => svg`<circle cx=${x} cy=${y} r=${r} fill="#0ff" stroke="#000" />`)}
          </svg>
        </div>
        <div class="old v">
          <button class="bevel" aria-label="Scroll up">${arrow("up")}</button>
          <div style=${styleMap({ flex: "70" })}></div><div class="bevel" style=${styleMap({ flex: "669" })}></div><div style=${styleMap({ flex: "39" })}></div>
          <button class="bevel" aria-label="Scroll down">${arrow("down")}</button>
        </div>
        <div class="old">
          <button class="bevel" aria-label="Scroll left">${arrow("left")}</button>
          <div class="bevel" style=${styleMap({ flex: "940" })}></div><div style=${styleMap({ flex: "30" })}></div>
          <button class="bevel" aria-label="Scroll right">${arrow("right")}</button>
        </div>
        ${this.grip()}
      </div>
    </section>`;
  }

  render() {
    const top = ["new", "del", "open", "paste", "save", "|", "print", "print2", "|", "cascade", "tileh", "tilev", "|", "plus", "minus", "expand", "center", "fit", "oneone", "|", "find", "find2", "target", "|", "report", "palette", "copies", "|", "calc"];
    const rail = ["list", "group", "netsel", "addsq", "branch", "movesq", "shape", "corner", "pump", "swap", "flip", "remsq"];
    return html`
      <header class="caption">${icon("app")}<h1 class="wide">ICE "ANGARA" (1-zhengding-CF2020-5-4-_2504-TWOLEVEL_new.mdb)</h1>
        ${["min", "restore", "close"].map((i) => html`<button aria-label=${i}>${icon(i)}</button>`)}
      </header>
      <nav class="menu wide">${["File", "View", "Schema", "Element", "Tasks", "Calculation", "Window", "Help"].map((m) => html`<button>${m}</button>`)}</nav>
      <div class="tools">${top.map((t) => this.tool(t))}</div>
      <main class="main">
        ${this.renderSide()}
        <div class="splitter"></div>
        ${this.renderData()}
        <div class="gap"><i></i></div>
        ${this.renderMap()}
        <div class="vbar outer">
          <button aria-label="Scroll up">${chevron("up")}</button>
          <div class="thumb" style=${styleMap({ flex: "800" })}></div><div style=${styleMap({ flex: "16" })}></div>
          <button aria-label="Scroll down">${chevron("down")}</button>
        </div>
        <div class="rail">${rail.map((t) => this.tool(t))}<i></i>${["cut", "copy", "dup"].map((t) => this.tool(t))}</div>
      </main>
      <footer class="foot"><i></i></footer>
    `;
  }
}
